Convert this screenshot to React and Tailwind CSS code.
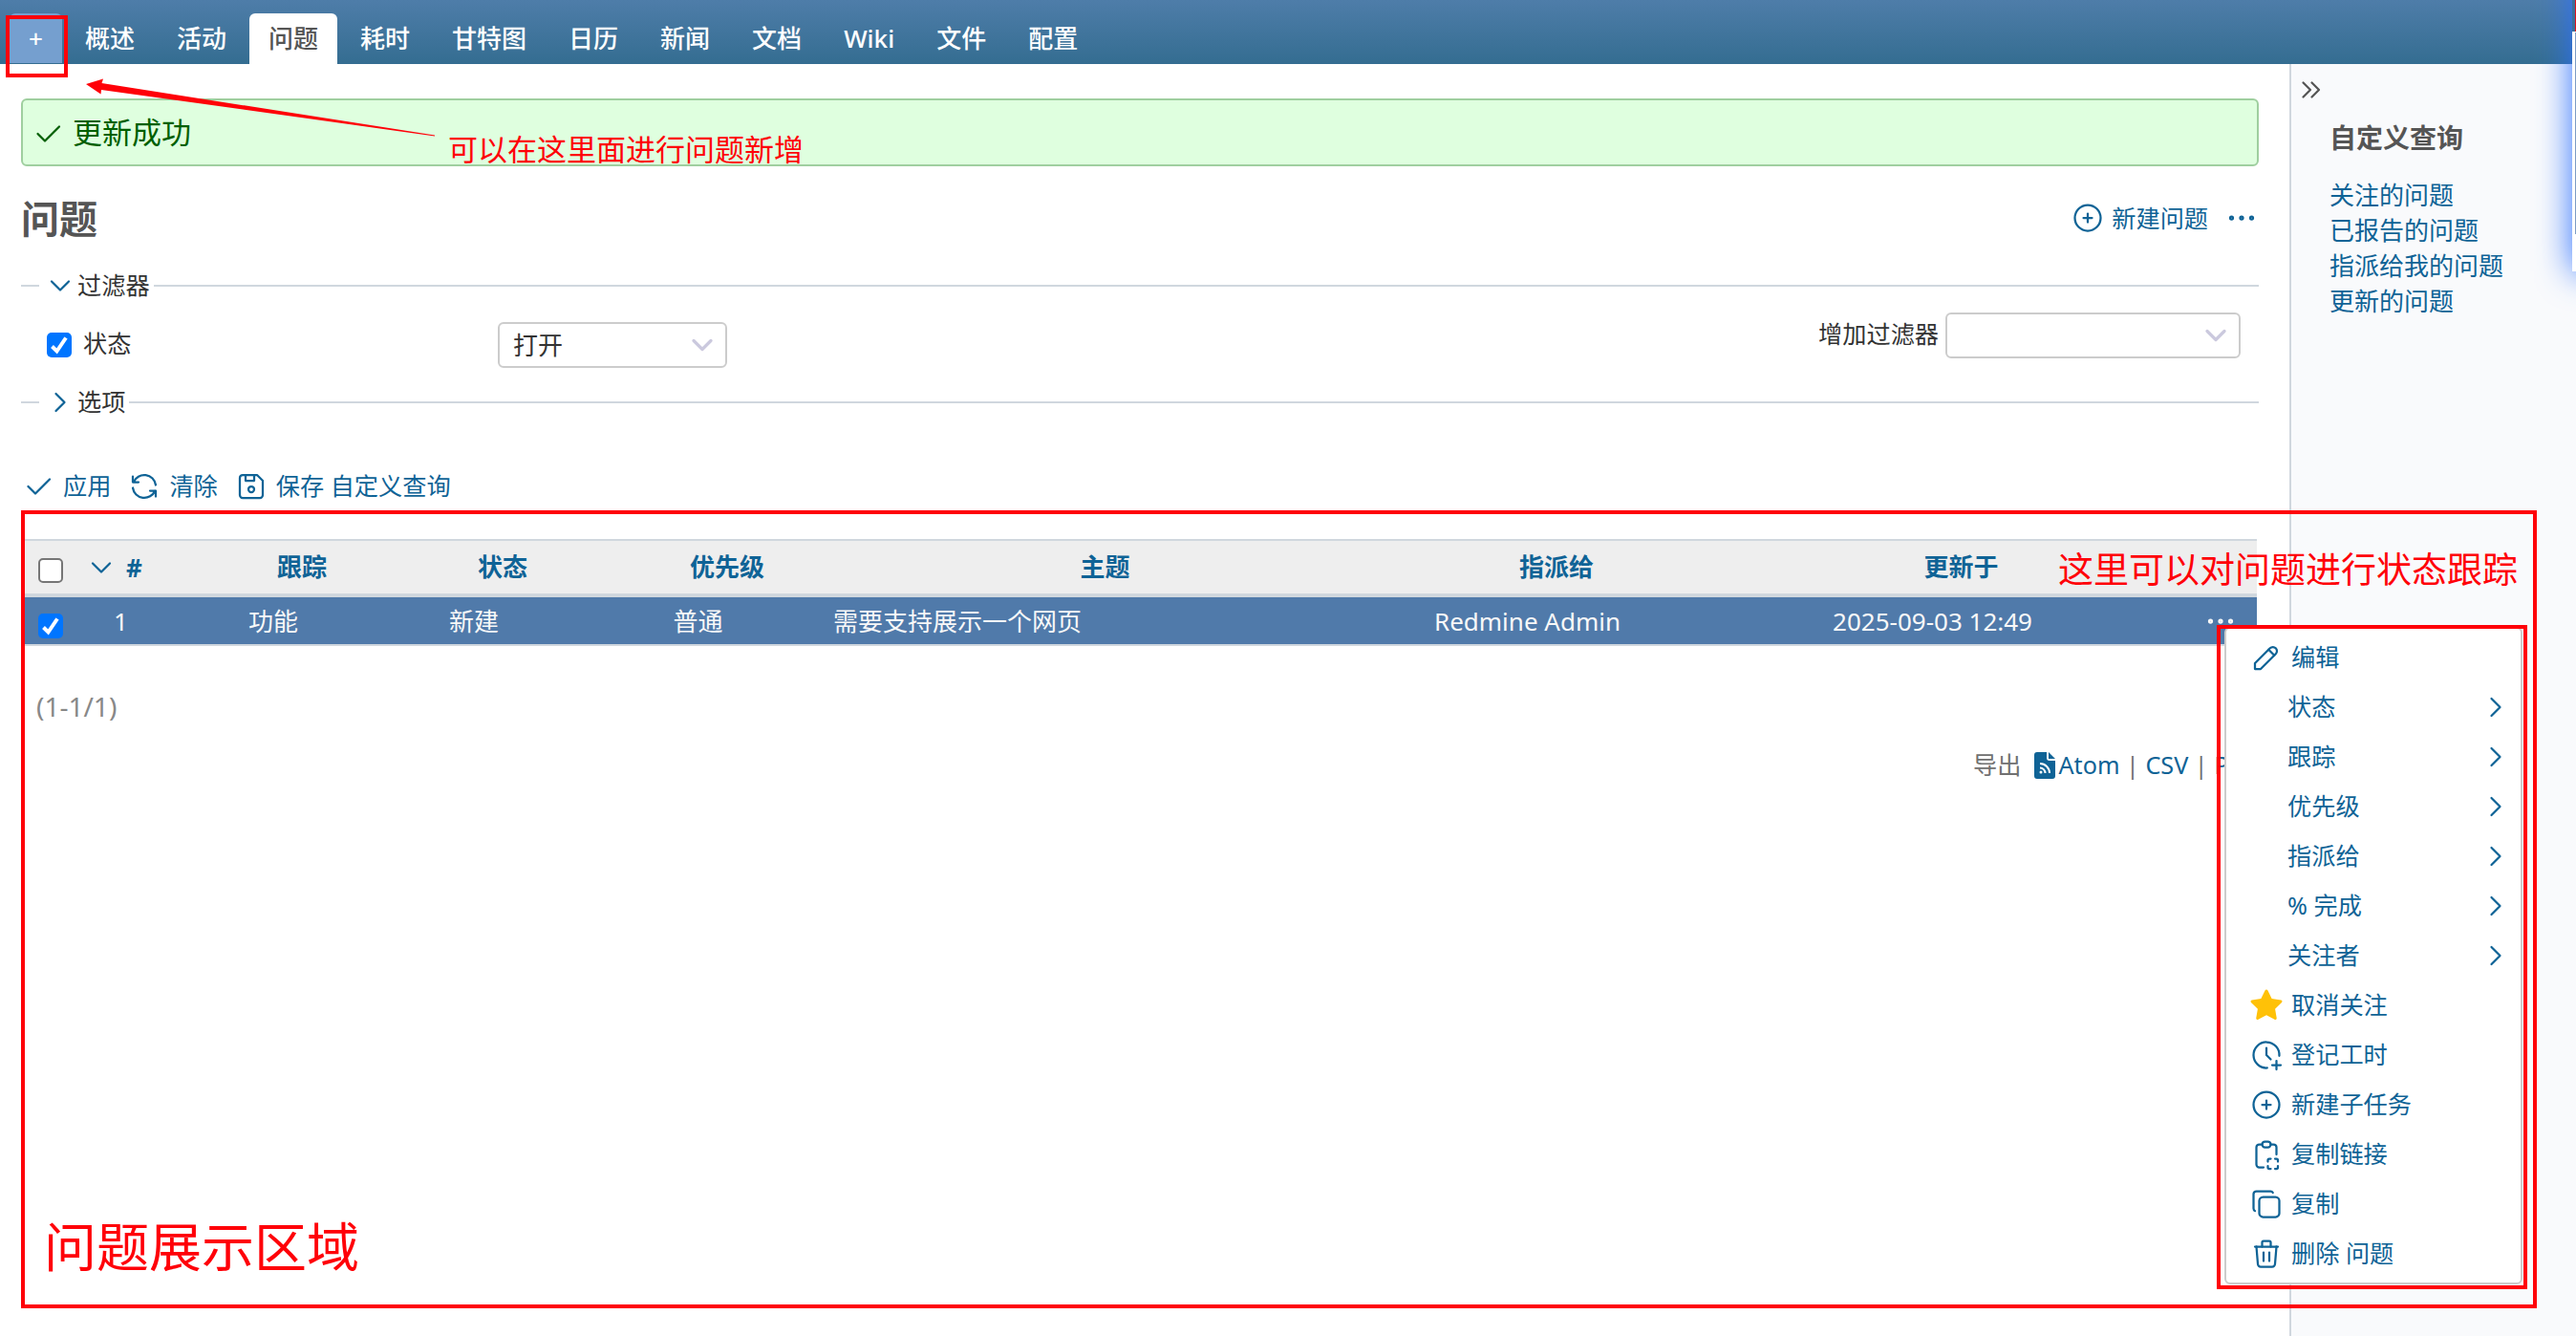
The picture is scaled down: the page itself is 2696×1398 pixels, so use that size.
import clsx from "clsx"

const tabs = ["概述", "活动", "问题", "耗时", "甘特图", "日历", "新闻", "文档", "Wiki", "文件", "配置"]

const queries = ["关注的问题", "已报告的问题", "指派给我的问题", "更新的问题"]

const menuItems = [
  { label: "编辑", icon: "edit" },
  { label: "状态", folder: true },
  { label: "跟踪", folder: true },
  { label: "优先级", folder: true },
  { label: "指派给", folder: true },
  { label: "% 完成", folder: true },
  { label: "关注者", folder: true },
  { label: "取消关注", icon: "star" },
  { label: "登记工时", icon: "time" },
  { label: "新建子任务", icon: "add" },
  { label: "复制链接", icon: "clipboard" },
  { label: "复制", icon: "copy" },
  { label: "删除 问题", icon: "trash" },
]

const paths = {
  check: ["M5 12l5 5l10 -10"],
  down: ["M6 9l6 6l6 -6"],
  right: ["M9 6l6 6l-6 6"],
  collapse: ["M7 7l5 5l-5 5", "M13 7l5 5l-5 5"],
  add: ["M3 12a9 9 0 1 0 18 0a9 9 0 0 0 -18 0", "M9 12h6", "M12 9v6"],
  dots: [
    "M4 12a1 1 0 1 0 2 0a1 1 0 1 0 -2 0",
    "M11 12a1 1 0 1 0 2 0a1 1 0 1 0 -2 0",
    "M18 12a1 1 0 1 0 2 0a1 1 0 1 0 -2 0",
  ],
  reload: [
    "M20 11a8.1 8.1 0 0 0 -15.5 -2m-.5 -4v4h4",
    "M4 13a8.1 8.1 0 0 0 15.5 2m.5 4v-4h-4",
  ],
  save: [
    "M6 4h10l4 4v10a2 2 0 0 1 -2 2h-12a2 2 0 0 1 -2 -2v-12a2 2 0 0 1 2 -2",
    "M10 14a2 2 0 1 0 4 0a2 2 0 1 0 -4 0",
    "M14 4v4h-6v-4",
  ],
  edit: ["M4 20h4l10.5 -10.5a2.828 2.828 0 1 0 -4 -4l-10.5 10.5v4", "M13.5 6.5l4 4"],
  time: [
    "M20.984 12.535a9 9 0 1 0 -8.468 8.45",
    "M16 19h6",
    "M19 16v6",
    "M12 7v5l3 3",
  ],
  clipboard: [
    "M9 5h-2a2 2 0 0 0 -2 2v12a2 2 0 0 0 2 2h3m9 -9v-5a2 2 0 0 0 -2 -2h-2",
    "M13 17v-1a1 1 0 0 1 1 -1h1m3 0h1a1 1 0 0 1 1 1v1m0 3v1a1 1 0 0 1 -1 1h-1m-3 0h-1a1 1 0 0 1 -1 -1v-1",
    "M9 5a2 2 0 0 1 2 -2h2a2 2 0 0 1 2 2a2 2 0 0 1 -2 2h-2a2 2 0 0 1 -2 -2",
  ],
  copy: [
    "M7 9.667a2.667 2.667 0 0 1 2.667 -2.667h8.666a2.667 2.667 0 0 1 2.667 2.667v8.666a2.667 2.667 0 0 1 -2.667 2.667h-8.666a2.667 2.667 0 0 1 -2.667 -2.667z",
    "M4.012 16.737a2.005 2.005 0 0 1 -1.012 -1.737v-10c0 -1.1 .9 -2 2 -2h10c.75 0 1.158 .385 1.5 1",
  ],
  trash: [
    "M4 7h16",
    "M10 11v6",
    "M14 11v6",
    "M5 7l1 12a2 2 0 0 0 2 2h8a2 2 0 0 0 2 -2l1 -12",
    "M9 7v-3a1 1 0 0 1 1 -1h4a1 1 0 0 1 1 1v3",
  ],
}

const Icon = ({ name, className = "size-9", strokeWidth = 1.5 }) => {
  if (name === "star") {
    return (
      <svg viewBox="0 0 24 24" className={clsx("shrink-0 fill-[#ffc107]", className)}>
        <path d="M8.243 7.34l-6.38 .925l-.113 .023a1 1 0 0 0 -.44 1.684l4.622 4.499l-1.09 6.355l-.013 .11a1 1 0 0 0 1.464 .944l5.706 -3l5.693 3l.1 .046a1 1 0 0 0 1.352 -1.1l-1.091 -6.355l4.624 -4.5l.078 -.085a1 1 0 0 0 -.633 -1.62l-6.38 -.926l-2.852 -5.78a1 1 0 0 0 -1.794 0l-2.853 5.78z" />
      </svg>
    )
  }
  return (
    <svg
      viewBox="0 0 24 24"
      fill="none"
      stroke="currentColor"
      strokeWidth={strokeWidth}
      strokeLinecap="round"
      strokeLinejoin="round"
      className={clsx("shrink-0", className)}
    >
      {paths[name].map((d) => (
        <path key={d} d={d} />
      ))}
    </svg>
  )
}

const Checkbox = ({ checked, className }) => (
  <span
    className={clsx(
      "flex size-[26px] shrink-0 items-center justify-center rounded-[5px]",
      checked ? "bg-[#0075ff] text-white" : "border-2 border-[#767676] bg-white",
      className
    )}
  >
    {checked && (
      <svg viewBox="0 0 26 26" className="size-[26px] fill-none stroke-current">
        <path d="M5.5 14.5l5 5l9.5 -14" strokeWidth="4" />
      </svg>
    )}
  </span>
)

const Select = ({ value, className }) => (
  <div
    className={clsx(
      "flex h-12 items-center justify-between rounded-[6px] border-2 border-[#ccc] bg-white pl-[14px] pr-[6px] text-[26px] leading-none",
      className
    )}
  >
    <span>{value}</span>
    <Icon name="down" className="size-9 text-[#cbc9de]" strokeWidth={2.2} />
  </div>
)

const Legend = ({ icon, label }) => (
  <div className="flex h-9 items-center">
    <span className="h-[2px] w-[19px] bg-[#d0d7de]" />
    <span className="ml-1 flex items-center text-[#0f6396]">
      <Icon name={icon} />
    </span>
    <span className="pr-1 pb-[2px] text-[25.2px] leading-[34px]">{label}</span>
    <span className="h-[2px] flex-1 bg-[#d0d7de]" />
  </div>
)

const Header = () => (
  <header className="flex h-[67px] items-end bg-linear-to-b from-[#4e7da9] to-[#346d91] pl-[10px] text-[26px] leading-[52px] text-white">
    <nav className="flex items-end gap-1">
      <span className="mb-px h-[52px] w-[55px] rounded-t-[6px] bg-[#759fcf] text-center font-medium">
        +
      </span>
      {tabs.map((tab) => (
        <span
          key={tab}
          className={clsx(
            "h-[53px] px-5 font-medium",
            tab === "问题" && "rounded-t-[6px] bg-white font-bold text-[#555]"
          )}
        >
          {tab}
        </span>
      ))}
    </nav>
  </header>
)

const Filters = () => (
  <section className="mt-[26px]">
    <Legend icon="down" label="过滤器" />
    <div className="flex h-[86px] items-start pt-[10px] pl-[27px]">
      <Checkbox checked className="mt-[21px]" />
      <span className="mt-[14px] ml-3 w-[434px] text-[25.2px] leading-9">状态</span>
      <Select value="打开" className="mt-[10px] w-60" />
      <span className="mt-1 ml-auto text-[25.2px] leading-9">增加过滤器</span>
      <Select className="mr-[19px] ml-[7px] w-[309px]" />
    </div>
    <Legend icon="right" label="选项" />
    <div className="mt-[52px] flex h-9 items-center gap-[17px] text-[25.2px] text-[#0f6396]">
      <span className="flex items-center gap-2">
        <Icon name="check" />
        应用
      </span>
      <span className="flex items-center gap-2">
        <Icon name="reload" />
        清除
      </span>
      <span className="flex items-center gap-2">
        <Icon name="save" />
        保存 自定义查询
      </span>
    </div>
  </section>
)

const columns = "grid grid-cols-[58px_151px_166px_254px_216px_575px_370px_477px_71px]"

const IssueTable = () => (
  <div className="mx-[2px] mt-[37px] text-[26px]">
    <div
      className={clsx(
        columns,
        "h-[61px] border-t-2 border-b-4 border-[#d0d7de] bg-[#eee] text-center leading-[54px] font-bold text-[#0f6396]"
      )}
    >
      <Checkbox className="mt-[18px] ml-4" />
      <span className="flex items-center gap-2 pl-[6px]">
        <Icon name="down" />
        <span>#</span>
      </span>
      <span>跟踪</span>
      <span>状态</span>
      <span>优先级</span>
      <span>主题</span>
      <span>指派给</span>
      <span>更新于</span>
    </div>
    <div
      className={clsx(
        columns,
        "h-[51px] border-b-2 border-[#d0d7de] bg-[#507aaa] text-center leading-[50px] text-[#f8f8f8]"
      )}
    >
      <Checkbox checked className="mt-[17px] ml-4" />
      <span className="pr-[62px]">1</span>
      <span className="pr-[60px]">功能</span>
      <span className="pr-[60px]">新建</span>
      <span className="pr-[61px]">普通</span>
      <span className="pl-[3px] text-left">需要支持展示一个网页</span>
      <span className="pr-[61px]">Redmine Admin</span>
      <span className="pr-[60px]">2025-09-03 12:49</span>
      <span className="flex justify-center pt-[7px] pr-[5px]">
        <Icon name="dots" />
      </span>
    </div>
  </div>
)

const ContextMenu = () => (
  <ul className="absolute top-[656px] left-[2328px] w-[312px] rounded-[6px] border-2 border-[#ccc] bg-white py-1 text-[25.2px] text-[#0f6396]">
    {menuItems.map(({ label, icon, folder }) => (
      <li
        key={label}
        className={clsx("flex h-[52px] items-center", folder ? "pl-[64px] pr-2" : "gap-2 pl-6")}
      >
        {icon && <Icon name={icon} />}
        <span>{label}</span>
        {folder && <Icon name="right" className="ml-auto size-9" />}
      </li>
    ))}
  </ul>
)

const Annotations = () => (
  <div className="absolute inset-0 leading-none text-[#ff0008]">
    <div className="absolute top-4 left-[6px] h-[65px] w-[65px] border-4 border-[#ff0008]" />
    <div className="absolute top-[534px] left-[22px] h-[835px] w-[2633px] border-4 border-[#ff0008]" />
    <div className="absolute top-[654px] left-[2320px] h-[695px] w-[325px] border-4 border-[#ff0008]" />
    <svg viewBox="0 0 400 80" className="absolute top-[75px] left-[80px] h-20 w-[400px] fill-current">
      <polygon points="10,13 28,7.5 26.5,12 375,66.5 375,67.5 26,19 25.5,23.5" />
    </svg>
    <span className="absolute top-[141px] left-[469px] text-[31px] whitespace-nowrap">
      可以在这里面进行问题新增
    </span>
    <span className="absolute top-[577px] left-[2154px] text-[37px] whitespace-nowrap">
      这里可以对问题进行状态跟踪
    </span>
    <span className="absolute top-[1276px] left-[46px] text-[55px] whitespace-nowrap">
      问题展示区域
    </span>
  </div>
)

const App = () => {
  return (
    <div className="relative flex h-[1398px] w-[2696px] flex-col overflow-hidden bg-white font-['Noto_Sans','Noto_Sans_CJK_SC',sans-serif] text-[#333]">
      <Header />
      <div className="flex flex-1">
        <main className="w-[2396px] pt-9 pr-8 pl-[22px]">
          <div className="flex h-[71px] items-center gap-2 rounded-[6px] border-2 border-[#9fcf9f] bg-[#dfffdf] pl-2 text-[31px] text-[#005f00]">
            <Icon name="check" className="mt-[2px] size-9" />
            更新成功
          </div>
          <div className="mt-[27px] flex h-[54px] items-center justify-between">
            <h2 className="pt-[2px] text-[40px] leading-[60px] font-bold text-[#555]">问题</h2>
            <div className="flex items-center pt-px text-[25.2px] text-[#0f6396]">
              <Icon name="add" />
              <span className="ml-[7px]">新建问题</span>
              <Icon name="dots" className="ml-[17px] size-9" />
            </div>
          </div>
          <Filters />
          <IssueTable />
          <p className="mt-[43px] pl-4 text-[28px] leading-10 text-[#888]">(1-1/1)</p>
          <p className="mt-[22px] flex h-10 items-center justify-end text-[25.2px] whitespace-pre text-[#707070]">
            导出
            <svg viewBox="0 0 22 28" className="ml-[14px] h-7 w-[22px]">
              <path
                d="M3 0h10v6a3 3 0 0 0 3 3h6v16a3 3 0 0 1 -3 3h-16a3 3 0 0 1 -3 -3v-22a3 3 0 0 1 3 -3zM15 0l7 7h-7z"
                className="fill-[#0f6396]"
              />
              <g className="fill-none stroke-white" strokeWidth="2">
                <path d="M6 12a10 10 0 0 1 10 10" />
                <path d="M6 16.500a5.500 5.500 0 0 1 5.500 5.500" />
              </g>
              <circle cx="7" cy="21" r="1.500" className="fill-white" />
            </svg>
            <span className="ml-[3px] text-[#0f6396]">Atom</span>
            {" | "}
            <span className="text-[#0f6396]">CSV</span>
            {" | "}
            <span className="text-[#0f6396]">PDF</span>
          </p>
        </main>
        <aside className="w-[300px] border-l-2 border-[#d0d7de] bg-[#f9fafc] pt-[9px] pl-[2px]">
          <span className="flex h-9 items-center text-[#555]">
            <Icon name="collapse" />
          </span>
          <h3 className="mt-3 pl-[38px] text-[28px] leading-10 font-bold text-[#555]">
            自定义查询
          </h3>
          <ul className="mt-[22px] pl-[38px] text-[26px] leading-[37px] text-[#0f6396]">
            {queries.map((query) => (
              <li key={query}>{query}</li>
            ))}
          </ul>
        </aside>
      </div>
      {/* edge of a panel docked beyond the right side */}
      <div className="absolute top-[-40px] left-[2692px] h-[324px] w-10 bg-white shadow-[0_0_36px_#2b6fff]" />
      <div className="absolute top-0 left-[2692px] h-[33px] w-1 border-r border-[#e0101c] bg-[#3b6f9a]" />
      <div className="absolute top-[34px] left-[2695px] h-[211px] w-px bg-[#7d9cc4]" />
      <ContextMenu />
      <Annotations />
    </div>
  )
}

export default App
